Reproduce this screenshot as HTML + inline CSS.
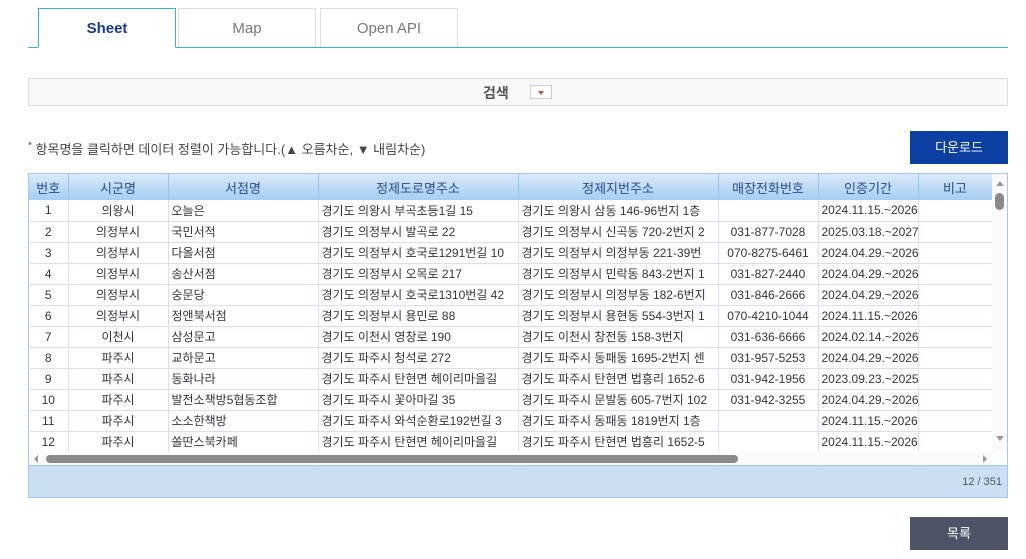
<!DOCTYPE html>
<html><head><meta charset="utf-8"><style>
*{box-sizing:border-box;margin:0;padding:0}
body{width:1026px;height:559px;background:#fff;font-family:"Liberation Sans","Noto Sans CJK KR",sans-serif;position:relative;overflow:hidden;color:#333}
.tab{position:absolute;top:8px;height:40px;border:1px solid #ddd;border-bottom:none;text-align:center;line-height:40px;font-size:15px;color:#777;background:#fff}
.tab.on{border:1px solid #3ab0e0;border-bottom:1px solid #fff;color:#1a3a8a;font-weight:bold;height:40px;z-index:2}
.line{position:absolute;left:28px;top:47px;width:980px;height:1px;background:#3ab0e0}
.search{position:absolute;left:28px;top:78px;width:980px;height:28px;background:#f8f8f8;border:1px solid #ddd}
.search b{position:absolute;left:454px;top:4px;font-size:14px;color:#555}
.dd{position:absolute;left:501px;top:6px;width:22px;height:14px;border:1px solid #ccc;background:#fff}
.dd:after{content:"";position:absolute;left:7px;top:5px;border:3px solid transparent;border-top:4px solid #a06030}
.note{position:absolute;left:28px;top:139px;font-size:13px;color:#444}
.btn{position:absolute;width:98px;height:33px;color:#fff;font-size:13px;text-align:center;line-height:33px}
.grid{position:absolute;left:28px;top:173px;width:980px;height:325px;border:1px solid #a8c4ec;overflow:hidden}
table{border-collapse:collapse;table-layout:fixed;position:absolute;left:0;top:0;width:963px}
th{height:26px;background:linear-gradient(#d8eafa,#a6cdf2);color:#2a4a8a;font-weight:normal;font-size:13px;border-right:1px solid #9ec0ea}
td{height:21px;font-size:12px;border-right:1px solid #dcdcfa;border-bottom:1px solid #dcdcfa;white-space:nowrap;overflow:hidden;padding:0 3px;color:#333}
td.c{text-align:center}
.vs{position:absolute;left:963px;top:0;width:16px;height:278px;background:#fafafa}
.hs{position:absolute;left:0;top:278px;width:963px;height:13px;background:#fafafa}
.foot{position:absolute;left:0;top:291px;width:980px;height:33px;background:#c8dff4;border-top:1px solid #a8c4ec;font-size:11px;color:#555;text-align:right;padding:10px 7px 0 0}
</style></head><body>
<div class="tab on" style="left:38px;width:138px">Sheet</div>
<div class="tab" style="left:178px;width:138px">Map</div>
<div class="tab" style="left:320px;width:138px">Open API</div>
<div class="line"></div>
<div class="search"><b>검색</b><div class="dd"></div></div>
<div class="note"><sup style="font-size:10px">*</sup> 항목명을 클릭하면 데이터 정렬이 가능합니다.(▲ 오름차순, ▼ 내림차순)</div>
<div class="btn" style="left:910px;top:131px;background:#0b3fa2">다운로드</div>
<div class="grid">
<table>
<colgroup><col style="width:39px"><col style="width:100px"><col style="width:150px"><col style="width:200px"><col style="width:200px"><col style="width:100px"><col style="width:100px"><col style="width:74px"></colgroup>
<tr><th>번호</th><th>시군명</th><th>서점명</th><th>정제도로명주소</th><th>정제지번주소</th><th>매장전화번호</th><th>인증기간</th><th>비고</th></tr>
<tr><td class="c">1</td><td class="c">의왕시</td><td>오늘은</td><td>경기도 의왕시 부곡초등1길 15</td><td>경기도 의왕시 삼동 146-96번지 1층</td><td class="c"></td><td>2024.11.15.~2026</td><td></td></tr>
<tr><td class="c">2</td><td class="c">의정부시</td><td>국민서적</td><td>경기도 의정부시 발곡로 22</td><td>경기도 의정부시 신곡동 720-2번지 2</td><td class="c">031-877-7028</td><td>2025.03.18.~2027</td><td></td></tr>
<tr><td class="c">3</td><td class="c">의정부시</td><td>다올서점</td><td>경기도 의정부시 호국로1291번길 10</td><td>경기도 의정부시 의정부동 221-39번</td><td class="c">070-8275-6461</td><td>2024.04.29.~2026</td><td></td></tr>
<tr><td class="c">4</td><td class="c">의정부시</td><td>송산서점</td><td>경기도 의정부시 오목로 217</td><td>경기도 의정부시 민락동 843-2번지 1</td><td class="c">031-827-2440</td><td>2024.04.29.~2026</td><td></td></tr>
<tr><td class="c">5</td><td class="c">의정부시</td><td>숭문당</td><td>경기도 의정부시 호국로1310번길 42</td><td>경기도 의정부시 의정부동 182-6번지</td><td class="c">031-846-2666</td><td>2024.04.29.~2026</td><td></td></tr>
<tr><td class="c">6</td><td class="c">의정부시</td><td>정앤북서점</td><td>경기도 의정부시 용민로 88</td><td>경기도 의정부시 용현동 554-3번지 1</td><td class="c">070-4210-1044</td><td>2024.11.15.~2026</td><td></td></tr>
<tr><td class="c">7</td><td class="c">이천시</td><td>삼성문고</td><td>경기도 이천시 영창로 190</td><td>경기도 이천시 창전동 158-3번지</td><td class="c">031-636-6666</td><td>2024.02.14.~2026</td><td></td></tr>
<tr><td class="c">8</td><td class="c">파주시</td><td>교하문고</td><td>경기도 파주시 청석로 272</td><td>경기도 파주시 동패동 1695-2번지 센</td><td class="c">031-957-5253</td><td>2024.04.29.~2026</td><td></td></tr>
<tr><td class="c">9</td><td class="c">파주시</td><td>동화나라</td><td>경기도 파주시 탄현면 헤이리마을길</td><td>경기도 파주시 탄현면 법흥리 1652-6</td><td class="c">031-942-1956</td><td>2023.09.23.~2025</td><td></td></tr>
<tr><td class="c">10</td><td class="c">파주시</td><td>발전소책방5협동조합</td><td>경기도 파주시 꽃아마길 35</td><td>경기도 파주시 문발동 605-7번지 102</td><td class="c">031-942-3255</td><td>2024.04.29.~2026</td><td></td></tr>
<tr><td class="c">11</td><td class="c">파주시</td><td>소소한책방</td><td>경기도 파주시 와석순환로192번길 3</td><td>경기도 파주시 동패동 1819번지 1층</td><td class="c"></td><td>2024.11.15.~2026</td><td></td></tr>
<tr><td class="c">12</td><td class="c">파주시</td><td>쏠딴스북카페</td><td>경기도 파주시 탄현면 헤이리마을길</td><td>경기도 파주시 탄현면 법흥리 1652-5</td><td class="c"></td><td>2024.11.15.~2026</td><td></td></tr>
</table>
<div class="vs"><div style="position:absolute;left:4px;top:7px;border:4px solid transparent;border-bottom:5px solid #999;border-top:none"></div><div style="position:absolute;left:3px;top:19px;width:9px;height:17px;border-radius:5px;background:#8a8a8a"></div><div style="position:absolute;left:4px;top:262px;border:4px solid transparent;border-top:5px solid #999;border-bottom:none"></div></div>
<div class="hs"><div style="position:absolute;left:5px;top:3px;border:4px solid transparent;border-right:4px solid #999;border-left:none"></div><div style="position:absolute;left:17px;top:3px;width:692px;height:8px;border-radius:4px;background:#8a8a8a"></div><div style="position:absolute;left:954px;top:3px;border:4px solid transparent;border-left:4px solid #999;border-right:none"></div></div>
<div class="foot">12 / 351</div>
</div>
<div class="btn" style="left:910px;top:517px;background:#4e5468">목록</div>
</body></html>
